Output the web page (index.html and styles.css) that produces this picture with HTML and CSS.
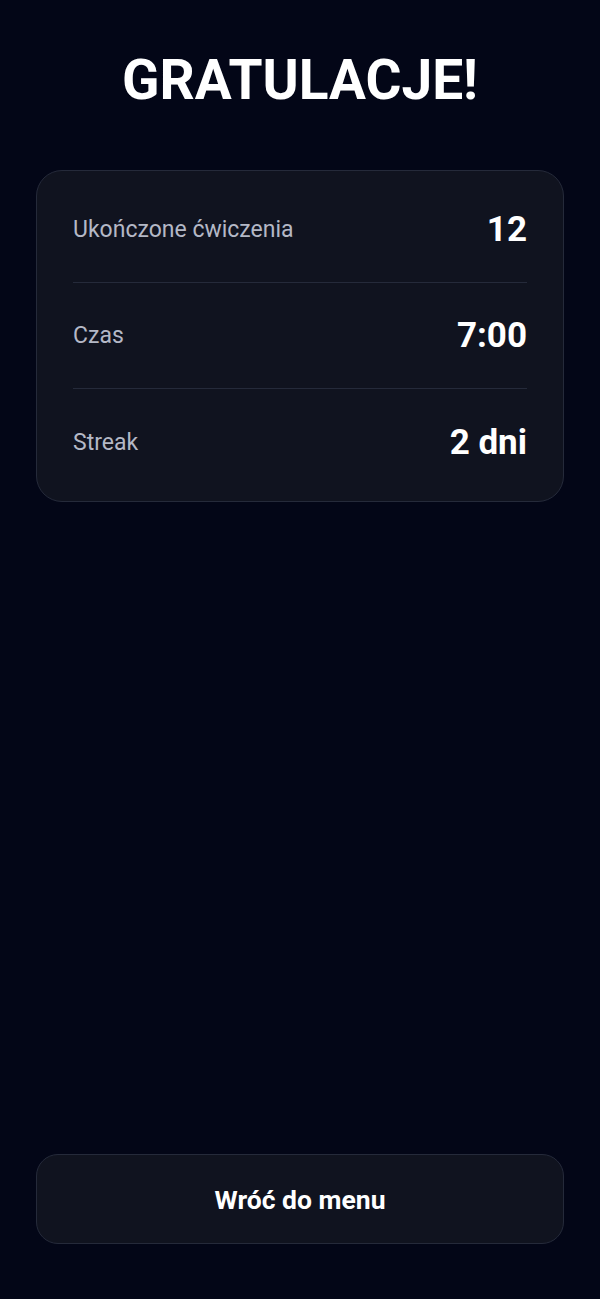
FILE: index.html
```html
<!DOCTYPE html>
<html lang="pl">
<head>
  <meta charset="UTF-8" />
  <meta name="viewport" content="width=device-width, initial-scale=1.0" />
  <title>Gratulacje</title>
  <link rel="stylesheet" href="styles.css">
</head>
<body>
  <div class="screen">
    <!-- tytuł -->
    <h1 class="title">GRATULACJE!</h1>

    <!-- podsumowanie treningu -->
    <div class="summary">
      <div class="row">
        <span class="label">Ukończone ćwiczenia</span>
        <span class="value">12</span>
      </div>
      <div class="row">
        <span class="label">Czas</span>
        <span class="value">7:00</span>
      </div>
      <div class="row">
        <span class="label">Streak</span>
        <span class="value">2 dni</span>
      </div>
    </div>

    <!-- powrót -->
    <button class="back-btn">Wróć do menu</button>
  </div>
</body>
</html>
```

FILE: styles.css
```css
* {
  box-sizing: border-box;
}

html, body {
  margin: 0;
  padding: 0;
  height: 100%;
  background-color: #030617;
  color: #ffffff;
  font-family: Roboto, 'Liberation Sans', sans-serif;
}

.screen {
  min-height: 100vh;
  display: flex;
  flex-direction: column;
  padding: 0 36px 55px;
}

.title {
  margin: 52px 0 0;
  text-align: center;
  font-size: 55px;
  font-weight: 700;
  line-height: 56px;
}

/* karta z wynikami */
.summary {
  margin-top: 62px;
  background-color: #10131f;
  border: 1px solid #252a3a;
  border-radius: 26px;
  padding: 6px 36px;
}

.row {
  display: flex;
  align-items: center;
  justify-content: space-between;
  height: 106px;
  border-bottom: 1px solid #252a3a;
}

.row:last-child {
  border-bottom: none;
}

.label {
  font-size: 23px;
  color: #b4b8c6;
}

.value {
  font-size: 35px;
  font-weight: 700;
}

.back-btn {
  margin-top: auto;
  height: 90px;
  width: 100%;
  background-color: #10131f;
  border: 1px solid #252a3a;
  border-radius: 22px;
  color: #ffffff;
  font-family: Roboto, 'Liberation Sans', sans-serif;
  font-size: 26.5px;
  font-weight: 700;
  cursor: pointer;
}
```
